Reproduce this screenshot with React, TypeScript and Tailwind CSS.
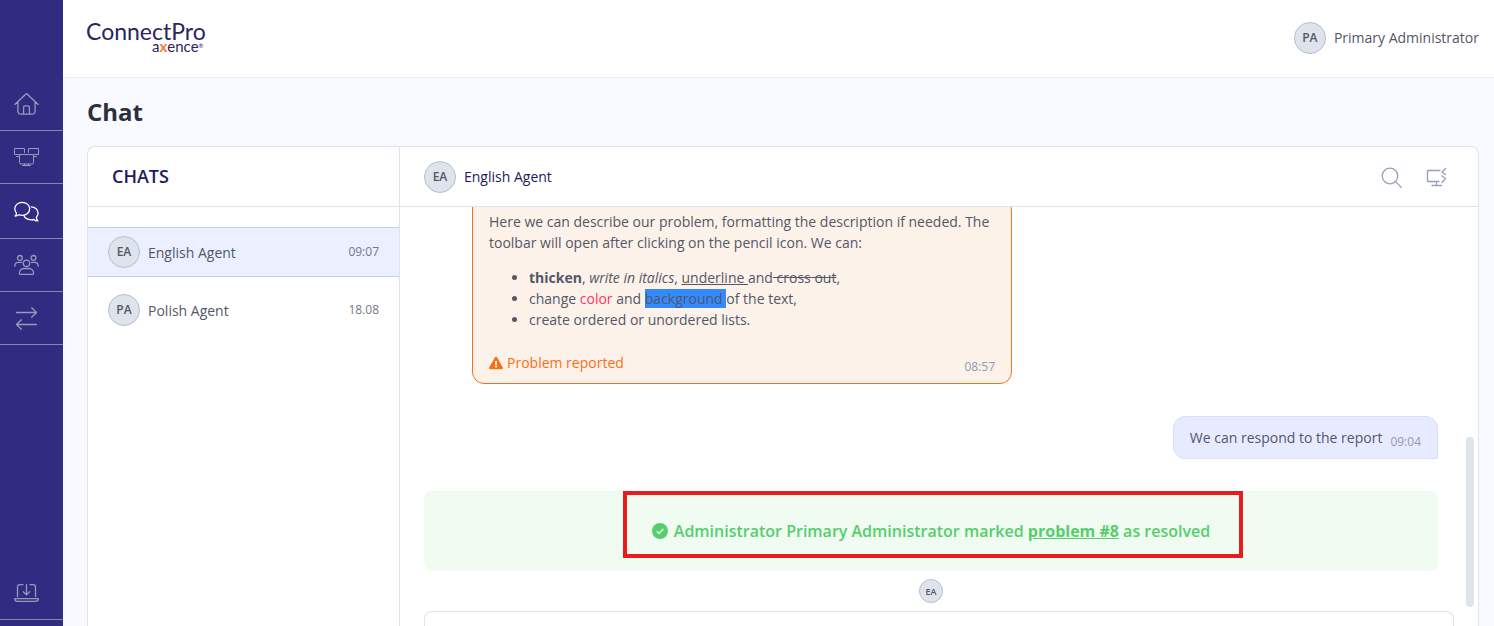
import clsx from "clsx"
import type { ReactNode } from "react"
import { FaExclamationTriangle } from "react-icons/fa"

function Icon({ children, className }: { children: ReactNode; className?: string }) {
  return (
    <svg
      className={className}
      width="26"
      height="26"
      viewBox="0 0 26 26"
      fill="none"
      stroke="currentColor"
      strokeWidth="1.3"
      strokeLinecap="round"
      strokeLinejoin="round"
      aria-hidden="true"
    >
      {children}
    </svg>
  )
}

const HomeIcon = () => (
  <Icon>
    <path d="M1.8 13.4 13.5 2.6l11.7 10.8M4.9 10.8v9.6a2.8 2.8 0 0 0 2.8 2.8h11.6a2.8 2.8 0 0 0 2.8-2.8v-9.6M10.6 23.2v-7a1.4 1.4 0 0 1 1.4-1.4h3a1.4 1.4 0 0 1 1.4 1.4v7" />
  </Icon>
)

const DevicesIcon = () => (
  <Icon>
    <path
      strokeWidth="1"
      d="M11.5 8.5v-4h-10v6h5M3.5 12.5h2M15.5 8.5v-4h10v6h-5M21.5 12.5h2M8 10.5h11a1.5 1.5 0 0 1 1.5 1.5v6.5a1.5 1.5 0 0 1-1.5 1.5H8a1.5 1.5 0 0 1-1.5-1.5V12A1.5 1.5 0 0 1 8 10.5zM11.5 20v1.5M15.5 20v1.5M9.5 21.5h8"
    />
  </Icon>
)

const ChatIcon = () => (
  <Icon>
    <path d="M2.1 18c1-.8 1.4-1.7 1.4-2.8a6.6 6.6 0 0 1-1.7-4.4C1.8 7 5.1 4.3 9.2 4.3s7.5 2.7 7.5 6.5-3.3 6.5-7.5 6.5c-1.200 0-2.300-.2-3.200-.6-1.200.8-2.500 1.300-3.900 1.300z" />
    <path d="M18.2 8.8c3.8.2 6.9 2.9 6.9 6.300 0 1.700-.6 3-1.700 4.200 0 1.300.4 2.700 1.500 3.600-1.700 0-3.100-.4-4.300-1.400-.8.2-1.500.3-2.400.3-3.500 0-6.300-1.600-7.300-4.200" />
  </Icon>
)

const UsersIcon = () => (
  <Icon>
    <circle cx="13.5" cy="11.3" r="3.2" />
    <circle cx="6.9" cy="5.9" r="2.4" />
    <circle cx="20.5" cy="5.9" r="2.4" />
    <path d="M6.4 21.5c0-3.2 2.4-5 5.2-5h3.8c2.8 0 5.2 1.8 5.2 5 0 .5-.4.9-.9.9H7.3c-.5 0-.9-.4-.9-.9zM1.8 14.200c0-2.500 1.600-3.800 3.700-3.800h3M25.200 14.200c0-2.500-1.600-3.800-3.700-3.800h-3" />
  </Icon>
)

const SwapIcon = () => (
  <Icon>
    <path d="M3.5 7.5h20M18.7 2.700l4.800 4.800-4.800 4.800M23.500 19.500h-20M8.300 14.700l-4.800 4.800 4.800 4.800" />
  </Icon>
)

const DownloadIcon = () => (
  <Icon>
    <path d="M4.5 16.5V7a2.3 2.3 0 0 1 2.3-2.300H10M17 4.700h3.200A2.300 2.300 0 0 1 22.500 7v9.500M13.500 4.700v10M10.300 11.700l3.200 3.200 3.200-3.200M1.700 18.600h23.600c0 1.700-.8 2.700-2.300 2.700H4c-1.500 0-2.300-1-2.300-2.700z" />
  </Icon>
)

const SearchIcon = () => (
  <Icon>
    <circle cx="11" cy="11" r="7.8" />
    <path d="m16.6 16.6 5.600 5.600" />
  </Icon>
)

const RemoteIcon = () => (
  <Icon>
    <path d="M16 5.500H3.500v11H15M12.500 16.500v4M8 20.500h9.500M21.500 3.500l-3.500 3.500 3.500 2.500M18 11l3.500 2.500-3.500 4" />
  </Icon>
)

const CheckIcon = () => (
  <svg width="16" height="16" viewBox="0 0 16 16" fill="none" aria-hidden="true">
    <circle cx="8" cy="8" r="8" fill="#55ce6c" />
    <path d="m4.800 8.300 2.200 2.200 4.300-4.500" stroke="#f0fcf2" strokeWidth="1.500" />
  </svg>
)

const menus = [
  { label: "Home", icon: <HomeIcon />, height: "h-[53px]" },
  { label: "Devices", icon: <DevicesIcon />, height: "h-[53px]" },
  { label: "Chat", icon: <ChatIcon />, height: "h-[55px]", active: true },
  { label: "Users", icon: <UsersIcon />, height: "h-[53px]" },
  { label: "Transfers", icon: <SwapIcon />, height: "h-[53px]" }
]

const chats = [
  { initials: "EA", name: "English Agent", time: "09:07", active: true },
  { initials: "PA", name: "Polish Agent", time: "18.08" }
]

function Avatar({ initials, small }: { initials: string; small?: boolean }) {
  return (
    <span
      className={clsx(
        "flex shrink-0 items-center justify-center rounded-full border border-[#b4bfd3] bg-[#dfe3ec] font-semibold text-[#535768]",
        small ? "size-6 text-[9px]" : "size-8 text-xs"
      )}
    >
      {initials}
    </span>
  )
}

function Sidebar() {
  return (
    <nav className="flex w-[63px] shrink-0 flex-col justify-between bg-[#302c82] pt-[78px] pb-1.5">
      <div>
        {menus.map(({ label, icon, height, active }) => (
          <a
            key={label}
            href="#"
            aria-label={label}
            className={clsx(
              "flex items-center border-b border-[#8489a8] pl-[13px]",
              height,
              active ? "text-white" : "text-[#959bb9]"
            )}
          >
            {icon}
          </a>
        ))}
      </div>
      <a
        href="#"
        aria-label="Download"
        className="flex h-[53px] items-center border-b border-[#8489a8] pl-[13px] text-[#959bb9]"
      >
        <DownloadIcon />
      </a>
    </nav>
  )
}

function Logo() {
  return (
    <a href="#" className="text-[#2b2560]">
      <svg width="128" height="44" viewBox="0 0 128 44" fill="currentColor" role="img">
        <text x="0" y="24" fontFamily="Lato, sans-serif" fontSize="23">
          ConnectPro
        </text>
        <text x="66" y="36" fontFamily="Lato, sans-serif" fontSize="15">
          a
          <tspan fill="#f47b3a" fontWeight="bold">
            x
          </tspan>
          ence
          <tspan fontSize="6" dy="-4">
            ®
          </tspan>
        </text>
      </svg>
    </a>
  )
}

function Header() {
  return (
    <header className="flex h-[78px] shrink-0 items-center justify-between border-b border-[#e9ebf2] bg-white pr-[15px] pb-px pl-[23px]">
      <Logo />
      <div className="flex items-center gap-2">
        <Avatar initials="PA" />
        <span className="pb-0.5">Primary Administrator</span>
      </div>
    </header>
  )
}

function ChatList() {
  return (
    <aside className="w-[312px] shrink-0 border-r border-[#dfe3ec]">
      <h2 className="flex h-[60px] items-center border-b border-[#dfe3ec] pb-0.5 pl-6 text-lg font-semibold text-[#211a5e]">
        CHATS
      </h2>
      <ul className="flex flex-col gap-2 pt-5">
        {chats.map(({ initials, name, time, active }) => (
          <li key={name}>
            <button
              type="button"
              className={clsx(
                "flex h-[50px] w-full items-center gap-2 border-y px-5 text-left",
                active ? "border-[#c3cffb] bg-[#ebefff]" : "border-transparent"
              )}
            >
              <Avatar initials={initials} />
              <span className="flex-1">{name}</span>
              <time className="text-xs text-[#747889]">{time}</time>
            </button>
          </li>
        ))}
      </ul>
    </aside>
  )
}

function ProblemMessage() {
  return (
    <article className="ml-12 w-[540px] shrink-0 rounded-xl rounded-tl-none border border-[#f5701f] bg-[#fdf2ea] px-4 pt-3 pb-1.5">
      <p>
        Here we can describe our problem, formatting the description if needed. The toolbar will open after
        clicking on the pencil icon. We can:
      </p>
      <ul className="mt-3.5 list-disc pl-10">
        <li>
          <strong>thicken</strong>, <em>write in italics</em>, <u>underline </u>and<s> cross out</s>,
        </li>
        <li>
          change <span className="text-[#ff3366]">color</span> and{" "}
          <span className="bg-[#338aff]">background </span>of the text,
        </li>
        <li>create ordered or unordered lists.</li>
      </ul>
      <footer className="mt-[22px] flex items-start justify-between">
        <span className="flex items-center gap-1 text-[#f96f16]">
          <FaExclamationTriangle size={14} />
          Problem reported
        </span>
        <time className="pt-1 text-xs/[21px] text-[#9499ae]">08:57</time>
      </footer>
    </article>
  )
}

function ResolvedNotice() {
  return (
    <div className="mt-8 flex h-20 shrink-0 items-center justify-center rounded-lg bg-[#f0fcf2]">
      <p className="relative flex items-center gap-1.5 text-base font-semibold text-[#55ce6c]">
        <CheckIcon />
        <span>
          Administrator Primary Administrator marked{" "}
          <a href="#" className="font-bold underline">
            problem #8
          </a>{" "}
          as resolved
        </span>
        <span className="absolute -top-7 -right-[33px] -bottom-[15px] -left-[29px] border-4 border-[#e81b1d]" />
      </p>
    </div>
  )
}

function Conversation() {
  return (
    <section className="flex min-w-0 flex-1 flex-col">
      <header className="flex h-[60px] shrink-0 items-center gap-2 border-b border-[#dfe3ec] pr-7 pl-6 text-[#211a5e]">
        <Avatar initials="EA" />
        <h3 className="flex-1">English Agent</h3>
        <div className="flex gap-[19px] pt-0.5 text-[#989fb9]">
          <button type="button" aria-label="Search">
            <SearchIcon />
          </button>
          <button type="button" aria-label="Remote access">
            <RemoteIcon />
          </button>
        </div>
      </header>
      <div className="flex min-h-0 flex-1 pr-1">
        <div className="flex min-w-0 flex-1 flex-col justify-end overflow-hidden pr-7 pb-2 pl-6">
          <ProblemMessage />
          <article className="mt-8 flex h-[43px] shrink-0 items-center gap-2 self-end rounded-xl rounded-br-none border border-[#d9e0fd] bg-[#e7ebff] px-4">
            <p>We can respond to the report</p>
            <time className="pt-2 text-xs text-[#9499ae]">09:04</time>
          </article>
          <ResolvedNotice />
          <div className="mt-2 flex justify-center">
            <Avatar initials="EA" small />
          </div>
        </div>
        <div className="flex w-2 flex-col justify-end pb-1">
          <div className="h-[170px] rounded-full bg-[#dfe3ec]" />
        </div>
      </div>
      <textarea
        aria-label="Message"
        className="mx-6 block h-[15px] shrink-0 resize-none rounded-t-lg border border-b-0 border-[#dfe3ec] outline-none"
      />
    </section>
  )
}

export default function App() {
  return (
    <div className="flex h-screen overflow-hidden bg-[#f9faff] font-['Open_Sans',sans-serif] text-sm/[21px] text-[#535768]">
      <Sidebar />
      <div className="flex min-w-0 flex-1 flex-col">
        <Header />
        <main className="flex min-h-0 flex-1 flex-col pr-[15px] pl-6">
          <h1 className="py-4 text-2xl/9 font-bold text-[#2c2f3d]">Chat</h1>
          <div className="flex min-h-0 flex-1 rounded-t-lg border border-b-0 border-[#dfe3ec] bg-white">
            <ChatList />
            <Conversation />
          </div>
        </main>
      </div>
    </div>
  )
}
